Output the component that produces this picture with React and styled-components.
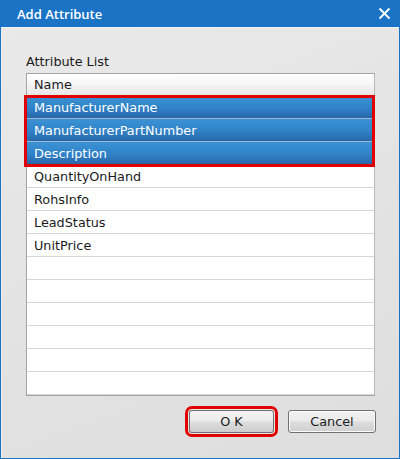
import React from 'react';
import styled, { createGlobalStyle } from 'styled-components';

const GlobalStyle = createGlobalStyle`
  html, body {
    margin: 0;
    padding: 0;
    background: #ffffff;
  }
  body {
    font-family: "DejaVu Sans", "Liberation Sans", sans-serif;
  }
`;

const Window = styled.div`
  width: 400px;
  height: 459px;
  box-sizing: border-box;
  display: flex;
  flex-direction: column;
  background: #1a73c5;
  padding: 0 1px 1px 1px;
`;

const TitleBar = styled.div`
  height: 27px;
  display: flex;
  align-items: center;
  justify-content: space-between;
  padding: 0 7px 0 16px;
  color: #ffffff;
  font-family: "Open Sans", "Liberation Sans", sans-serif;
  font-weight: 600;
  font-size: 13px;
`;

const CloseButton = styled.button`
  width: 16px;
  height: 16px;
  padding: 0;
  border: none;
  background: transparent;
  display: flex;
  align-items: center;
  justify-content: center;
  cursor: pointer;
`;

const Body = styled.div`
  flex: 1;
  display: flex;
  flex-direction: column;
  border-top: 1px solid #f2f2f2;
  border-left: 1px solid #eeeeee;
  background: linear-gradient(160deg, #e9e9e9 0%, #e2e2e2 60%, #dedede 100%);
  padding: 26px 24px 0 24px;
`;

const Label = styled.div`
  font-size: 12.8px;
  line-height: 16px;
  color: #1b1b1b;
  margin-bottom: 3px;
`;

const TableWrap = styled.div`
  position: relative;
  width: 349px;
  box-sizing: border-box;
  border: 1px solid #a3a3a3;
  border-right-color: #b8b8b8;
  background: #ffffff;
`;

const HeaderCell = styled.div`
  height: 21px;
  display: flex;
  align-items: center;
  padding-left: 7px;
  font-size: 12.8px;
  color: #1b1b1b;
  background: linear-gradient(#ffffff 0%, #f6f6f6 45%, #e6e6e6 100%);
  border-bottom: 1px solid #b9b9b9;
`;

const Row = styled.div`
  height: 22px;
  display: flex;
  align-items: center;
  padding-left: 7px;
  font-size: 12.8px;
  color: ${(p) => (p.$selected ? '#ffffff' : '#1b1b1b')};
  background: ${(p) =>
    p.$selected ? 'linear-gradient(#3a92d4 0%, #3082c7 55%, #2a66aa 100%)' : '#ffffff'};
  border-bottom: 1px solid ${(p) => (p.$selected ? '#9fb6cf' : '#d6d6d6')};
  &:last-child {
    height: 23px;
    border-bottom: none;
  }
`;

const Highlight = styled.div`
  position: absolute;
  left: -3px;
  right: -1px;
  top: 21px;
  height: 72px;
  border: 3px solid #e00000;
  box-sizing: border-box;
  pointer-events: none;
`;

const Footer = styled.div`
  display: flex;
  justify-content: flex-end;
  gap: 14px;
  padding-top: 14px;
  width: 350px;
`;

const Button = styled.button`
  height: 23px;
  width: ${(p) => p.$width}px;
  border: 1px solid #707070;
  border-radius: 3px;
  background: linear-gradient(#f2f2f2 0%, #ebebeb 48%, #dddddd 52%, #cfcfcf 100%);
  font-family: "DejaVu Sans", "Liberation Sans", sans-serif;
  font-size: 12.8px;
  color: #1b1b1b;
  padding: 0;
  cursor: pointer;
  box-shadow: ${(p) =>
    p.$marked ? '0 0 0 1px #e6e6e6, 0 0 0 4px #e00000' : 'inset 0 0 0 1px #fbfbfb'};
`;

const items = [
  { name: 'ManufacturerName', selected: true },
  { name: 'ManufacturerPartNumber', selected: true },
  { name: 'Description', selected: true },
  { name: 'QuantityOnHand' },
  { name: 'RohsInfo' },
  { name: 'LeadStatus' },
  { name: 'UnitPrice' },
  { name: '' },
  { name: '' },
  { name: '' },
  { name: '' },
  { name: '' },
  { name: '' },
];

const App = () => {
  return (
    <>
      <GlobalStyle />
      <Window>
        <TitleBar>
          <span>Add Attribute</span>
          <CloseButton aria-label="Close">
            <svg width="13" height="13" viewBox="0 0 13 13">
              <path d="M1.5 1.5 L11.5 11.5 M11.5 1.5 L1.5 11.5" stroke="#ffffff" strokeWidth="1.8" />
            </svg>
          </CloseButton>
        </TitleBar>
        <Body>
          <Label>Attribute List</Label>
          <TableWrap>
            <HeaderCell>Name</HeaderCell>
            {items.map((item, i) => (
              <Row key={i} $selected={item.selected}>
                {item.name}
              </Row>
            ))}
            <Highlight />
          </TableWrap>
          <Footer>
            <Button $width={85} $marked>O K</Button>
            <Button $width={88}>Cancel</Button>
          </Footer>
        </Body>
      </Window>
    </>
  );
};

export default App;
